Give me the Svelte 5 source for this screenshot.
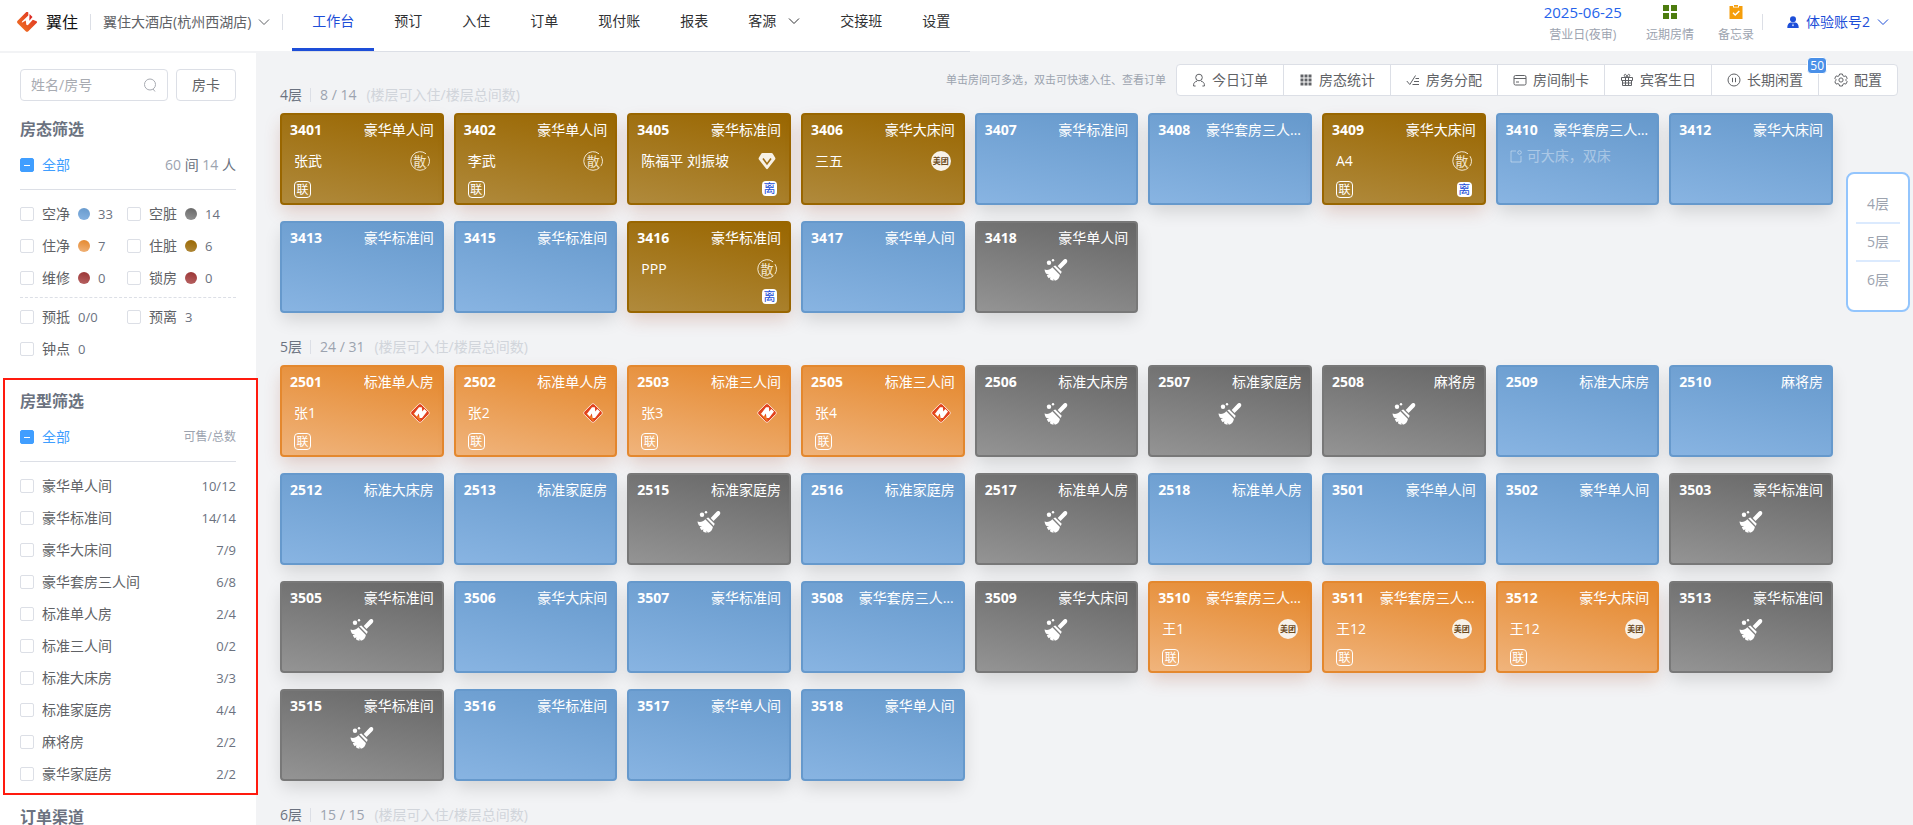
<script>
  const nav = ['工作台', '预订', '入住', '订单', '现付账', '报表', '客源', '交接班', '设置'];

  const tools = [
    { label: '今日订单', icon: 'user' },
    { label: '房态统计', icon: 'grid' },
    { label: '房务分配', icon: 'task' },
    { label: '房间制卡', icon: 'card' },
    { label: '宾客生日', icon: 'gift' },
    { label: '长期闲置', icon: 'pause', badge: 50 },
    { label: '配置', icon: 'gear' }
  ];

  const states = [
    { label: '空净', tone: 'blue', count: '33' },
    { label: '空脏', tone: 'gray', count: '14' },
    { label: '住净', tone: 'orange', count: '7' },
    { label: '住脏', tone: 'brown', count: '6' },
    { label: '维修', tone: 'red', count: '0' },
    { label: '锁房', tone: 'red', count: '0' }
  ];
  const plans = [
    { label: '预抵', count: '0/0' },
    { label: '预离', count: '3' },
    { label: '钟点', count: '0' }
  ];
  const types = [
    ['豪华单人间', '10/12'],
    ['豪华标准间', '14/14'],
    ['豪华大床间', '7/9'],
    ['豪华套房三人间', '6/8'],
    ['标准单人房', '2/4'],
    ['标准三人间', '0/2'],
    ['标准大床房', '3/3'],
    ['标准家庭房', '4/4'],
    ['麻将房', '2/2'],
    ['豪华家庭房', '2/2']
  ];

  const room = (no, type, tone = 'blue', extra = {}) => ({ no, type, tone, ...extra });
  const floors = [
    {
      name: '4层',
      free: '8 / 14',
      rooms: [
        room('3401', '豪华单人间', 'brown', { guest: '张武', source: 'walkin', linked: true }),
        room('3402', '豪华单人间', 'brown', { guest: '李武', source: 'walkin', linked: true }),
        room('3405', '豪华标准间', 'brown', { guest: '陈福平 刘振坡', source: 'member', leaving: true }),
        room('3406', '豪华大床间', 'brown', { guest: '三五', source: 'meituan' }),
        room('3407', '豪华标准间'),
        room('3408', '豪华套房三人间'),
        room('3409', '豪华大床间', 'brown', { guest: 'A4', source: 'walkin', linked: true, leaving: true }),
        room('3410', '豪华套房三人间', 'blue', { note: '可大床，双床' }),
        room('3412', '豪华大床间'),
        room('3413', '豪华标准间'),
        room('3415', '豪华标准间'),
        room('3416', '豪华标准间', 'brown', { guest: 'PPP', source: 'walkin', leaving: true }),
        room('3417', '豪华单人间'),
        room('3418', '豪华单人间', 'gray')
      ]
    },
    {
      name: '5层',
      free: '24 / 31',
      rooms: [
        room('2501', '标准单人房', 'orange', { guest: '张1', source: 'brand', linked: true }),
        room('2502', '标准单人房', 'orange', { guest: '张2', source: 'brand', linked: true }),
        room('2503', '标准三人间', 'orange', { guest: '张3', source: 'brand', linked: true }),
        room('2505', '标准三人间', 'orange', { guest: '张4', source: 'brand', linked: true }),
        room('2506', '标准大床房', 'gray'),
        room('2507', '标准家庭房', 'gray'),
        room('2508', '麻将房', 'gray'),
        room('2509', '标准大床房'),
        room('2510', '麻将房'),
        room('2512', '标准大床房'),
        room('2513', '标准家庭房'),
        room('2515', '标准家庭房', 'gray'),
        room('2516', '标准家庭房'),
        room('2517', '标准单人房', 'gray'),
        room('2518', '标准单人房'),
        room('3501', '豪华单人间'),
        room('3502', '豪华单人间'),
        room('3503', '豪华标准间', 'gray'),
        room('3505', '豪华标准间', 'gray'),
        room('3506', '豪华大床间'),
        room('3507', '豪华标准间'),
        room('3508', '豪华套房三人间'),
        room('3509', '豪华大床间', 'gray'),
        room('3510', '豪华套房三人间', 'orange', { guest: '王1', source: 'meituan', linked: true }),
        room('3511', '豪华套房三人间', 'orange', { guest: '王12', source: 'meituan', linked: true }),
        room('3512', '豪华大床间', 'orange', { guest: '王12', source: 'meituan', linked: true }),
        room('3513', '豪华标准间', 'gray'),
        room('3515', '豪华标准间', 'gray'),
        room('3516', '豪华标准间'),
        room('3517', '豪华单人间'),
        room('3518', '豪华单人间')
      ]
    },
    { name: '6层', free: '15 / 15', rooms: [] }
  ];
</script>

{#snippet chevron()}
  <svg class="chevron" viewBox="0 0 12 12" aria-hidden="true"><path d="M1 3.5 6 8.5l5-5" /></svg>
{/snippet}

{#snippet toolIcon(name)}
  <svg class="tool-icon" viewBox="0 0 14 14" aria-hidden="true">
    {#if name === 'user'}
      <circle cx="7" cy="4.5" r="3.3" />
      <path d="M1.6 13v-1.2c0-2 1.5-3.2 3.4-3.6M12.4 13v-1.2c0-2-1.5-3.2-3.4-3.6M1.6 13h2M12.4 13h-2" />
    {:else if name === 'grid'}
      <path class="solid" d="M1.5 1.5h3v3h-3zM5.5 1.5h3v3h-3zM9.5 1.5h3v3h-3zM1.5 5.5h3v3h-3zM5.5 5.5h3v3h-3zM9.5 5.5h3v3h-3zM1.5 9.5h3v3h-3zM5.5 9.5h3v3h-3zM9.5 9.5h3v3h-3z" />
    {:else if name === 'task'}
      <path d="M.8 8 3.8 11.500 9.500 2.500M9.500 5.500H13M8 8.500h5M6.500 11.500H13" />
    {:else if name === 'card'}
      <rect x="1" y="2.500" width="12" height="9.500" rx="1.500" />
      <path d="M1 5.500h12M3 9h3" />
    {:else if name === 'gift'}
      <path d="M1.500 4.500h11v3h-11zM2.500 7.500v5h9v-5M5.500 4.500v8M8.500 4.500v8M2.500 10h9M7 4.500C4.500 4 4 3 4.300 2 4.800.8 6.500 1 7 4.200c.5-3.200 2.200-3.400 2.700-2.200C10 3 9.500 4 7 4.500z" />
    {:else if name === 'pause'}
      <circle cx="7" cy="7" r="6" />
      <path d="M5.500 4.800v4.400M8.500 4.800v4.400" />
    {:else}
      <circle cx="7" cy="7" r="2.100" />
      <path d="M5.600 1h2.800l.5 1.700 1.200.7 1.700-.5 1.400 2.400L12 6.500v1l1.200 1.200-1.400 2.400-1.700-.5-1.200.7-.5 1.700H5.600l-.5-1.700-1.200-.7-1.700.5L.8 8.700 2 7.500v-1L.8 5.300l1.400-2.400 1.700.5 1.200-.7z" />
    {/if}
  </svg>
{/snippet}

{#snippet sourceIcon(name)}
  {#if name === 'walkin'}
    <span class="source walkin">
      <svg viewBox="0 0 20 20" aria-hidden="true"><path d="M16 2.800A9.300 9.300 0 1 0 16.500 16.700M18 5.200a9.300 9.300 0 0 1-.2 10" /></svg>
      <span>散</span>
    </span>
  {:else if name === 'meituan'}
    <span class="source meituan">美团</span>
  {:else if name === 'member'}
    <svg class="source" viewBox="0 0 20 20" aria-hidden="true">
      <path fill="#f7f1e6" d="M5.500 2h9c.6 0 1 .2 1.300.7l2.400 4c.3.6.3 1.200-.1 1.700L11 17.600c-.6.7-1.400.7-2 0L1.900 8.400c-.4-.5-.4-1.100-.1-1.700l2.400-4C4.500 2.200 4.900 2 5.500 2z" />
      <path fill="none" stroke="#a0711a" stroke-width="1.600" d="M6 7.500 10 13l4-5.500" />
    </svg>
  {:else}
    <svg class="source" viewBox="0 0 20 20" aria-hidden="true">
      <path fill="#e2431e" stroke="#fbe3d2" stroke-width="1" d="M8.700 1.200 1.200 8.700c-.7.7-.7 1.900 0 2.600l7.500 7.500c.7.7 1.900.7 2.600 0l7.500-7.500c.7-.7.7-1.900 0-2.600l-7.500-7.500c-.7-.7-1.900-.7-2.600 0z" />
      <path fill="#f07a22" d="M3 10.500h4l4 7-1 .7z" />
      <path fill="#fff" d="M4 10.800 9 4.300h2.800l.5 4.300 2-2.600 2.700 2.500-5 6.500H9.600l-.8-4.400-2 2.800z" />
    </svg>
  {/if}
{/snippet}

<div class="shell">
  <header class="topbar">
    <div class="brand">
      <svg class="logo" viewBox="0 0 20 20" aria-hidden="true">
        <defs>
          <linearGradient id="flame" x1="1" y1="0" x2="0" y2="1">
            <stop offset="0" stop-color="#dc2a22" />
            <stop offset="1" stop-color="#f27a24" />
          </linearGradient>
        </defs>
        <path fill="url(#flame)" d="M11.300.4v3L5 9.400l-.2 1.300 4-2.200.5 4.200 1.500.5 5-5.400 3.800 1.400c.6.6.5 1.300 0 1.800l-8.300 8.300c-.7.7-1.900.7-2.600 0L.6 11.300c-.7-.7-.7-1.800 0-2.500L8.800.6c.7-.6 1.700-.6 2.500-.2z" />
        <path fill="#dc2a22" d="m12.500 2 3 3-3.200 3.800z" />
      </svg>
      <span class="brand-name">翼住</span>
    </div>
    <button class="hotel" type="button">翼住大酒店(杭州西湖店){@render chevron()}</button>
    <nav class="nav">
      {#each nav as item, i}
        <a href="#{item}" class:active={i === 0}>{item}{#if item === '客源'}{@render chevron()}{/if}</a>
      {/each}
    </nav>
    <div class="status">
      <a class="stat" href="#audit"><span class="date">2025-06-25</span><span class="caption">营业日(夜审)</span></a>
      <a class="stat" href="#forecast">
        <span class="glyph"><svg viewBox="0 0 14 14" aria-hidden="true"><path fill="#4d7c0f" d="M0 0h6v6H0zM8 0h6v6H8zM0 8h6v6H0zM8 8h6v6H8z" /></svg></span>
        <span class="caption">远期房情</span>
      </a>
      <a class="stat" href="#memo">
        <span class="glyph"><svg viewBox="0 0 14 14" aria-hidden="true"><path fill="#f59e0b" d="M.5 1H4v1.500h6V1h3.500v13H.5zM5 0h4v1.700H5z" /><path fill="none" stroke="#fff" stroke-width="1.400" d="m4 7.800 2.200 2.200L10.300 6" /></svg></span>
        <span class="caption">备忘录</span>
      </a>
    </div>
    <button class="account" type="button">
      <svg class="avatar" viewBox="0 0 12 12" aria-hidden="true"><circle cx="6" cy="3.200" r="3" /><path d="M.3 12c0-3 1-5 3.400-5.400h4.600C10.700 7 11.700 9 11.700 12z" /><path fill="#fff" d="m6 7 .6 2.500L6 10.500l-.6-1z" /></svg>
      体验账号2{@render chevron()}
    </button>
  </header>

  <div class="body">
    <aside class="sidebar">
      <div class="search">
        <label class="search-box">
          <input type="text" placeholder="姓名/房号" aria-label="姓名/房号" />
          <svg viewBox="0 0 14 14" aria-hidden="true"><circle cx="7" cy="6.500" r="5.500" /><path d="m10 11 2 2.500" /></svg>
        </label>
        <button type="button">房卡</button>
      </div>

      <section class="filter">
        <h2>房态筛选</h2>
        <div class="summary">
          <label><input class="partial" type="checkbox" />全部</label>
          <span class="totals">60 <b>间</b> 14 <b>人</b></span>
        </div>
        <div class="pairs">
          {#each states as s}
            <label><input type="checkbox" />{s.label}<i class="dot {s.tone}"></i><span class="count">{s.count}</span></label>
          {/each}
        </div>
        <hr />
        <div class="pairs">
          {#each plans as p}
            <label><input type="checkbox" />{p.label}<span class="count">{p.count}</span></label>
          {/each}
        </div>
      </section>

      <section class="filter marked">
        <h2>房型筛选</h2>
        <div class="summary">
          <label><input class="partial" type="checkbox" />全部</label>
          <span class="caption">可售/总数</span>
        </div>
        <div class="list">
          {#each types as [name, count]}
            <label><input type="checkbox" />{name}<span class="count">{count}</span></label>
          {/each}
        </div>
      </section>

      <section class="filter last">
        <h2>订单渠道</h2>
      </section>
    </aside>

    <main class="board">
      <div class="toolbar">
        <span class="tip">单击房间可多选，双击可快速入住、查看订单</span>
        <div class="tools">
          {#each tools as t}
            <button type="button">{@render toolIcon(t.icon)}{t.label}{#if t.badge}<span class="badge">{t.badge}</span>{/if}</button>
          {/each}
        </div>
      </div>

      <div class="floors">
        {#each floors as floor}
          <section class="floor">
            <header>
              <span class="floor-name">{floor.name}</span>
              <span class="free">{floor.free}</span>
              <span class="legend">(楼层可入住/楼层总间数)</span>
            </header>
            {#if floor.rooms.length}
              <div class="rooms">
                {#each floor.rooms as r}
                  <button type="button" class="room {r.tone}">
                    <span class="head"><b>{r.no}</b><span class="type">{r.type}</span></span>
                    {#if r.tone === 'gray'}
                      <svg class="broom" viewBox="0 0 26 24" aria-hidden="true">
                        <path d="M23.300 1.300c1.300 1 1.300 2.500.2 3.600l-6 6-2.800-2.800 5.700-6.200c.8-.9 1.900-1.300 2.900-.6zM10.300 8.300l2-.8 6.400 6.300-.9 2.100zM9.300 9.300l7.600 7.600c-.5 3-2 5.200-5 5.800l-1.300-2-.1 2c-1.400-.1-2.600-.6-3.600-1.500l.5-2-1.700 1c-1-1-1.500-2-1.900-3.200l2.300-.8-3-.4c-.8-1.200-1.400-2.500-1.600-4.200 3 .8 5.600.2 7.800-2.300z" />
                        <circle cx="6" cy="4.800" r="2.200" /><circle cx="10" cy="2.300" r="1.200" />
                      </svg>
                    {/if}
                    {#if r.note}
                      <span class="note">
                        <svg viewBox="0 0 12 14" aria-hidden="true"><path d="M6 2H1v11h10V7" /><circle cx="9.500" cy="3.500" r="1.800" /></svg>{r.note}
                      </span>
                    {/if}
                    {#if r.guest}
                      <span class="guest"><span>{r.guest}</span>{@render sourceIcon(r.source)}</span>
                      <span class="tags">
                        {#if r.linked}<span class="linked">联</span>{/if}
                        {#if r.leaving}<span class="leaving">离</span>{/if}
                      </span>
                    {/if}
                  </button>
                {/each}
              </div>
            {/if}
          </section>
        {/each}
      </div>
    </main>
  </div>

  <nav class="jump">
    {#each floors as floor}
      <a href="#{floor.name}">{floor.name}</a>
    {/each}
  </nav>
</div>

<style>
  :global(body) {
    margin: 0;
    background: #f2f3f5;
  }
  .shell {
    display: flex;
    flex-direction: column;
    height: 100vh;
    overflow: hidden;
    font: 14px/20px 'Open Sans', 'Noto Sans CJK SC', sans-serif;
    color: #303133;
    background: #f2f3f5;
  }
  .shell *,
  .shell *::before {
    box-sizing: border-box;
  }
  button,
  input {
    font: inherit;
    color: inherit;
  }
  button {
    padding: 0;
    border: 0;
    background: none;
    cursor: pointer;
  }
  a {
    color: inherit;
    text-decoration: none;
  }
  h2 {
    margin: 0;
    font-size: 16px;
    line-height: 16px;
    font-weight: 600;
    color: #6b7280;
  }
  .chevron {
    width: 12px;
    height: 12px;
    flex: none;
    fill: none;
    stroke: currentColor;
  }

  /* top bar */
  .topbar {
    display: flex;
    flex: none;
    align-items: flex-start;
    height: 51px;
    padding: 0 24px 0 17px;
    background: #fff;
    white-space: nowrap;
  }
  .brand,
  .hotel,
  .account {
    display: flex;
    align-items: center;
    height: 44px;
  }
  .logo {
    width: 20px;
    height: 20px;
  }
  .brand-name {
    margin-left: 9px;
    font-size: 16px;
    color: #111;
  }
  .account {
    background: linear-gradient(#dcdfe6, #dcdfe6) no-repeat 0 center / 1px 16px;
  }
  .hotel {
    gap: 7px;
    margin-left: 12px;
    padding: 0 13px;
    color: #606266;
    background:
      linear-gradient(#dcdfe6, #dcdfe6) no-repeat 0 center / 1px 16px,
      linear-gradient(#dcdfe6, #dcdfe6) no-repeat 100% center / 1px 16px;
  }
  .nav {
    display: flex;
    margin-left: 9px;
    border-bottom: 1px solid #dcdfe6;
  }
  .nav a {
    display: flex;
    align-items: center;
    gap: 12px;
    height: 51px;
    padding: 0 20px 9px;
  }
  .nav a.active {
    color: #1d4ed8;
    box-shadow: inset 0 -3px #1d4ed8;
  }
  .status {
    display: flex;
    gap: 24px;
    margin-left: auto;
    padding-top: 2px;
  }
  .stat {
    display: flex;
    flex-direction: column;
    align-items: center;
    gap: 3px;
  }
  .date {
    color: #2563eb;
    font-size: 15px;
  }
  .caption {
    font-size: 12px;
    color: #9ca3af;
  }
  .glyph {
    display: flex;
    align-items: center;
    height: 20px;
  }
  .glyph svg {
    width: 14px;
    height: 14px;
  }
  .account {
    gap: 7px;
    margin-left: 8px;
    padding-left: 25px;
    color: #1d4ed8;
  }
  .avatar {
    width: 12px;
    height: 12px;
    fill: currentColor;
  }

  /* side filters */
  .body {
    display: flex;
    flex: 1;
    min-height: 0;
  }
  .sidebar {
    position: relative;
    z-index: 1;
    flex: none;
    width: 256px;
    margin-top: 2px;
    padding: 16px 20px 0;
    background: #fff;
    color: #606266;
  }
  .search {
    display: flex;
    gap: 8px;
    height: 32px;
  }
  .search-box,
  .search button {
    border: 1px solid #dcdfe6;
    border-radius: 4px;
  }
  .search button {
    flex: none;
    width: 60px;
  }
  .search-box {
    display: flex;
    flex: 1;
    align-items: center;
    min-width: 0;
    padding: 0 10px;
  }
  .search-box input {
    flex: 1;
    min-width: 0;
    padding: 0;
    border: 0;
    outline: 0;
    background: none;
  }
  .search-box input::placeholder {
    color: #a8abb2;
  }
  .search-box svg {
    width: 14px;
    height: 14px;
    fill: none;
    stroke: #a8abb2;
  }
  .filter {
    margin-top: 20px;
  }
  .marked {
    position: relative;
    margin-top: 28px;
  }
  .marked::before {
    content: '';
    position: absolute;
    inset: -15px -22px -5px -17px;
    border: 2px solid #ff1a0e;
    pointer-events: none;
  }
  .last {
    margin-top: 19px;
  }
  .filter label {
    display: flex;
    align-items: center;
  }
  .filter input {
    appearance: none;
    width: 14px;
    height: 14px;
    margin: 0 8px 0 0;
    border: 1px solid #dcdfe6;
    border-radius: 2px;
    background: #fff;
  }
  .filter input.partial {
    border-color: #409eff;
    background: linear-gradient(#fff, #fff) no-repeat center / 6px 1px #409eff;
  }
  .summary {
    display: flex;
    justify-content: space-between;
    margin: 18px 0 8px;
    padding-bottom: 14px;
    border-bottom: 1px solid #dcdfe6;
  }
  .summary label {
    color: #409eff;
  }
  .totals {
    color: #9ca3af;
  }
  .totals b {
    font-weight: 400;
    color: #6b7280;
  }
  .pairs {
    display: grid;
    grid-template-columns: 107px 1fr;
  }
  .pairs label,
  .list label {
    height: 32px;
  }
  .dot {
    width: 12px;
    height: 12px;
    margin-left: 8px;
    border-radius: 50%;
  }
  .count {
    margin-left: 8px;
    font-size: 13px;
    color: #6b7280;
  }
  .list .count {
    margin-left: auto;
  }
  hr {
    margin: 3px 0;
    border: 0;
    border-top: 1px dashed #dcdfe6;
  }

  /* room board */
  .board {
    flex: 1;
    min-width: 0;
  }
  .toolbar {
    position: relative;
    z-index: 1;
    display: flex;
    align-items: center;
    justify-content: flex-end;
    gap: 10px;
    width: fit-content;
    margin: 13px 15px 0 auto;
  }
  .tip {
    font-size: 11px;
    color: #9ca3af;
  }
  .tools {
    display: flex;
    height: 32px;
    border: 1px solid #dcdfe6;
    border-radius: 4px;
    background: #fff;
    color: #606266;
  }
  .tools button {
    position: relative;
    display: flex;
    align-items: center;
    gap: 6px;
    padding: 0 15px;
    white-space: nowrap;
  }
  .tools button + button {
    border-left: 1px solid #dcdfe6;
  }
  .tool-icon {
    width: 14px;
    height: 14px;
    fill: none;
    stroke: #606266;
  }
  .solid {
    fill: #606266;
    stroke: none;
  }
  .badge {
    position: absolute;
    z-index: 1;
    top: -8px;
    right: -9px;
    padding: 0 2px;
    border: 1px solid #fff;
    border-radius: 4px;
    background: #4a90e8;
    color: #fff;
    font-size: 12px;
    line-height: 15px;
  }
  .floors {
    display: flex;
    flex-direction: column;
    gap: 16px;
    margin-top: -19px;
    padding: 0 80px 0 24px;
  }
  .floor header {
    display: flex;
    align-items: center;
    height: 36px;
  }
  .floor-name {
    color: #6b7280;
  }
  .free {
    margin: 0 10px 0 8px;
    padding-left: 9px;
    border-left: 1px solid #dcdfe6;
    line-height: 14px;
    color: #9ca3af;
  }
  .legend {
    color: #d1d5db;
  }
  .rooms {
    display: grid;
    grid-template-columns: repeat(auto-fill, minmax(160px, 1fr));
    gap: 16px 10px;
  }
  .room {
    display: flex;
    flex-direction: column;
    min-width: 0;
    height: 92px;
    padding: 5px 8px 0;
    border: 2px solid;
    border-radius: 4px;
    color: #fff;
    text-align: left;
    box-shadow: 0 8px 18px -2px rgb(0 0 0 / 14%);
  }
  .blue {
    border-color: #6699cc;
    background: linear-gradient(192deg, #6699cc, #88b4e2);
  }
  .brown {
    border-color: #996600;
    background: linear-gradient(192deg, #996600, #b08a3c);
  }
  .orange {
    border-color: #e4882e;
    background: linear-gradient(192deg, #e4862a, #f0b47c);
  }
  .gray {
    border-color: #787878;
    background: linear-gradient(192deg, #666, #949494);
  }
  .red {
    background: linear-gradient(192deg, #993333, #b86464);
  }
  .room.brown,
  .room.orange {
    box-shadow: 0 8px 18px -2px rgb(150 50 20 / 22%);
  }
  .head {
    display: flex;
    justify-content: space-between;
  }
  .type {
    max-width: 96px;
    overflow: hidden;
    text-overflow: ellipsis;
    white-space: nowrap;
  }
  .guest,
  .tags {
    display: flex;
    align-items: center;
    justify-content: space-between;
    margin: 11px 4px 0;
  }
  .tags {
    margin-top: 10px;
  }
  .source {
    width: 20px;
    height: 20px;
  }
  .walkin {
    display: grid;
    place-items: center;
    font-size: 13px;
    color: #f3e8d2;
  }
  .walkin > * {
    grid-area: 1 / 1;
  }
  .walkin svg {
    width: 20px;
    height: 20px;
    fill: none;
    stroke: currentColor;
  }
  .meituan {
    border-radius: 50%;
    background: #f8f2e9;
    color: #6b4a1c;
    font-size: 8px;
    font-weight: 700;
    text-align: center;
  }
  .linked,
  .leaving {
    border-radius: 4px;
    font-size: 12px;
    line-height: 15px;
    text-align: center;
  }
  .linked {
    width: 17px;
    border: 1px solid #fff;
  }
  .leaving {
    width: 15px;
    margin-left: auto;
    background: #fff;
    color: #1d4ed8;
  }
  .broom {
    width: 26px;
    height: 24px;
    margin: 10px auto 0;
    fill: #fff;
  }
  .note {
    display: flex;
    align-items: center;
    gap: 5px;
    margin: 6px 4px 0;
    color: rgb(255 255 255 / 40%);
  }
  .note svg {
    width: 12px;
    height: 14px;
    fill: none;
    stroke: currentColor;
  }

  /* floor shortcuts floating over the board */
  .jump {
    position: fixed;
    top: 172px;
    right: 3px;
    z-index: 2;
    padding: 12px 8px;
    border: 2px solid #93c5fd;
    border-radius: 8px;
    background: #fff;
    color: #9ca3af;
  }
  .jump a {
    display: block;
    padding: 8px 11px;
    line-height: 20px;
  }
  .jump a + a {
    border-top: 2px solid #dbeafe;
  }
</style>
